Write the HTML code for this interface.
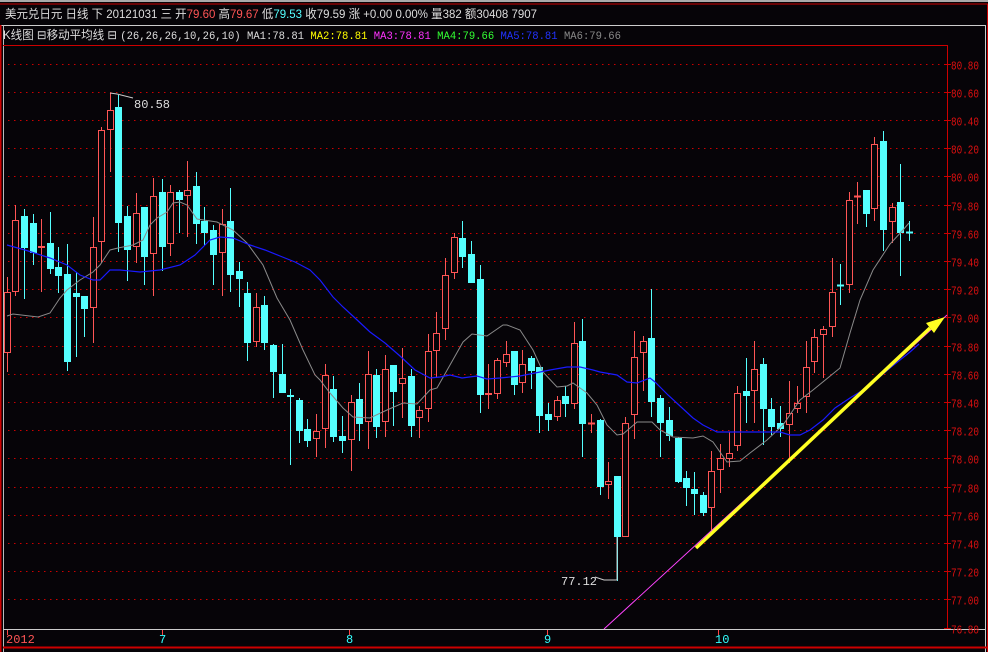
<!DOCTYPE html>
<html><head><meta charset="utf-8"><style>
html,body{margin:0;padding:0;background:#060408;width:988px;height:652px;overflow:hidden}
svg{display:block}
text{font-family:"Liberation Mono","Noto Sans CJK SC",monospace}
.h{font-family:"Liberation Sans","Noto Sans CJK SC",sans-serif;font-size:12px}
</style></head><body>
<svg id="s" width="988" height="652" xmlns="http://www.w3.org/2000/svg">
<rect width="988" height="652" fill="#060408"/>
<line x1="0" y1="1" x2="988" y2="1" stroke="#aaa" stroke-width="2"/>
<line x1="0" y1="4" x2="988" y2="4" stroke="#c00" stroke-width="1"/>
<line x1="0" y1="25.5" x2="985" y2="25.5" stroke="#ccc" stroke-width="1"/>
<line x1="985.5" y1="25" x2="985.5" y2="652" stroke="#ccc"/>
<line x1="987.5" y1="4" x2="987.5" y2="652" stroke="#c00"/>
<line x1="0.5" y1="25" x2="0.5" y2="652" stroke="#c00" stroke-width="2"/>
<line x1="3.5" y1="25" x2="3.5" y2="652" stroke="#bbb"/>
<line x1="3" y1="45.5" x2="947" y2="45.5" stroke="#c00"/>
<line x1="947.5" y1="45" x2="947.5" y2="629" stroke="#c00"/>
<line x1="3" y1="629.5" x2="985" y2="629.5" stroke="#ccc"/>
<line x1="3" y1="647.5" x2="988" y2="647.5" stroke="#c00" stroke-width="2"/>
<text class="h" x="5" y="18" fill="#ddd" textLength="532" lengthAdjust="spacingAndGlyphs">美元兑日元 日线 下 20121031 三 开<tspan fill="#ff5555">79.60</tspan> 高<tspan fill="#ff5555">79.67</tspan> 低<tspan fill="#55ffff">79.53</tspan> 收79.59 涨 +0.00 0.00% 量382 额30408 7907</text>
<text class="h" x="3" y="39" fill="#ddd" textLength="618" lengthAdjust="spacingAndGlyphs">K线图 ⊟移动平均线 ⊟ <tspan font-family="Liberation Mono" font-size="11">(26,26,26,10,26,10) MA1:78.81 <tspan fill="#ffff00">MA2:78.81</tspan> <tspan fill="#ff33ff">MA3:78.81</tspan> <tspan fill="#33ff33">MA4:79.66</tspan> <tspan fill="#2233ff">MA5:78.81</tspan> <tspan fill="#888">MA6:79.66</tspan></tspan></text>
<g id="g"></g>
</svg>
<script>
var g=document.getElementById('g'),h='';
function Y(p){return 543-(p-77.4)*141;}
var labs=['80.80','80.60','80.40','80.20','80.00','79.80','79.60','79.40','79.20','79.00','78.80','78.60','78.40','78.20','78.00','77.80','77.60','77.40','77.20','77.00','76.80'];
for(var i=0;i<labs.length;i++){var y=Math.round(Y(parseFloat(labs[i])))+0.5;
 if(y<628) h+='<line x1="8" y1="'+y+'" x2="947" y2="'+y+'" stroke="#c00" stroke-dasharray="1.5 4.5"/>';
 h+='<line x1="944" y1="'+y+'" x2="951" y2="'+y+'" stroke="#c00"/>';
 h+='<text x="951" y="'+(y+5)+'" fill="#e01010" font-size="11.5" textLength="28" lengthAdjust="spacingAndGlyphs">'+labs[i]+'</text>';}
var c=[[7,277,292,353,372,1],[15,205,220,292,296,1],[24,209,216,248,299,0],[33,214,223,253,265,0],[41,219,246,248,292,1],[50,212,243,269,274,0],[58,247,267,276,293,0],[67,244,274,362,371,0],[76,272,293,297,357,0],[84,296,296,309,337,0],[93,217,247,308,343,1],[101,127,130,242,263,1],[110,93,110,130,172,1],[118,95,107,223,252,0],[127,206,216,250,281,0],[136,193,213,247,263,1],[144,207,207,257,285,0],[153,178,196,254,296,1],[162,179,192,247,271,0],[170,185,192,244,256,1],[179,190,192,200,233,0],[187,161,190,196,237,1],[196,172,186,224,244,0],[204,207,221,233,245,0],[213,225,230,255,285,0],[222,209,224,253,296,1],[230,188,221,275,292,0],[239,262,271,279,307,0],[247,282,293,343,361,0],[256,293,307,342,347,1],[264,296,305,343,350,0],[273,344,345,372,398,0],[282,344,374,393,393,0],[290,389,395,397,465,0],[299,398,400,431,443,0],[307,419,429,441,447,0],[316,414,431,439,457,1],[325,364,375,429,448,1],[333,376,389,437,442,0],[342,416,436,441,453,0],[351,395,402,440,471,1],[359,383,399,424,441,0],[368,351,374,422,449,1],[376,369,375,427,438,0],[385,355,369,422,437,1],[393,365,365,392,426,0],[402,348,378,384,418,1],[411,369,376,426,437,0],[419,406,410,418,438,1],[428,334,351,409,422,1],[436,312,333,351,377,1],[445,258,275,329,340,1],[454,233,237,273,279,1],[462,221,238,257,268,0],[471,241,254,283,283,0],[480,265,279,395,413,0],[488,364,393,395,409,1],[497,358,360,394,399,1],[506,341,354,363,367,1],[514,351,351,385,395,0],[522,350,364,383,393,1],[531,356,358,371,389,0],[539,367,367,416,433,0],[548,403,414,420,431,0],[557,396,400,417,421,1],[565,386,396,404,417,0],[574,322,343,404,409,1],[582,319,341,424,457,0],[591,414,423,423,433,1],[600,419,420,487,495,0],[608,462,481,485,499,1],[617,476,476,537,581,0],[625,417,423,537,537,1],[634,331,357,415,439,1],[643,336,341,353,391,1],[651,289,338,402,417,0],[660,395,398,423,457,0],[669,407,420,436,441,0],[678,437,438,482,483,0],[686,471,478,488,506,0],[694,472,489,494,515,0],[703,492,495,513,516,0],[711,451,471,508,530,1],[720,444,458,470,493,1],[729,432,453,459,467,1],[737,386,393,446,451,1],[746,358,391,396,423,0],[754,341,369,391,423,1],[763,358,364,409,445,0],[771,398,409,427,435,0],[780,406,423,429,437,0],[789,381,413,425,463,1],[797,386,403,409,413,1],[806,341,367,397,413,1],[814,329,337,362,373,1],[823,326,329,335,378,1],[832,258,292,327,337,1],[840,264,285,285,305,0],[849,192,200,285,293,1],[857,182,196,196,224,1],[866,190,190,214,227,0],[874,137,144,209,221,1],[883,131,141,230,251,0],[892,203,207,222,243,1],[900,164,202,233,276,0],[909,221,232,232,241,0]];
function pl(pts,col,w){return '<polyline fill="none" stroke="'+col+'" stroke-width="'+w+'" points="'+pts+'"/>';}
for(var i=0;i<c.length;i++){var d=c[i],x=d[0],col=d[5]?'#ff5555':'#55ffff';
 h+='<line x1="'+(x+0.5)+'" y1="'+d[1]+'" x2="'+(x+0.5)+'" y2="'+d[4]+'" stroke="'+col+'"/>';
 var bh=d[3]-d[2];
 if(bh<2){h+='<line x1="'+(x-3)+'" y1="'+(d[2]+0.5)+'" x2="'+(x+4)+'" y2="'+(d[2]+0.5)+'" stroke="'+col+'" stroke-width="2"/>';}
 else if(d[5]){h+='<rect x="'+(x-2.5)+'" y="'+(d[2]+0.5)+'" width="6" height="'+(bh-1)+'" fill="#060408" stroke="'+col+'"/>';}
 else{h+='<rect x="'+(x-3)+'" y="'+d[2]+'" width="7" height="'+bh+'" fill="'+col+'"/>';}}
h+=pl('7,316 13,314 38,317 50,313 60,298 67,290 80,280 93,272 100,265 110,250 118,248 133,245 143,240 150,225 157,218 167,212 173,203 180,202 187,205 197,219 217,222 233,230 247,243 263,265 277,298 290,320 303,350 315,375 320,380 330,393 343,408 353,417 370,418 387,410 403,403 417,404 430,390 437,388 450,365 463,342 472,334 487,336 503,325 507,325 520,330 533,350 543,372 557,387 567,386 573,383 587,393 597,405 607,425 617,435 623,434 637,422 652,422 660,430 673,437 693,438 703,436 713,442 727,462 740,461 750,453 767,440 783,425 800,400 813,390 840,368 850,333 860,300 873,270 890,244 903,230 909,223','#8a8a8a',1);
h+=pl('7,245 25,250 50,258 67,265 80,275 93,280 100,280 110,270 120,270 140,272 160,270 180,265 195,255 210,240 220,237 233,238 250,245 265,250 280,256 295,262 310,270 320,280 333,297 343,307 355,318 370,332 385,343 400,356 415,370 430,378 440,377 450,375 462,378 477,376 487,379 500,378 520,376 535,373 550,370 567,367 580,367 593,370 600,372 617,375 627,382 637,383 650,378 655,382 668,395 680,406 693,418 703,425 717,432 730,432 760,432 780,432 790,435 800,435 810,430 823,420 835,408 850,398 863,390 876,380 890,368 900,360 910,352 919,344','#1a1aff',1.2);
h+='<line x1="604" y1="629" x2="947" y2="315" stroke="#ff44ff" stroke-width="1"/>';
h+='<line x1="696" y1="548" x2="930" y2="328" stroke="#ffff22" stroke-width="3.5"/>';
h+='<polygon points="945,317 926,323 934,333" fill="#ffff22"/>';
h+='<polyline points="110,93 117,94 133,98" fill="none" stroke="#ccc"/><text x="134" y="108" fill="#ddd" font-size="12">80.58</text>';
h+='<polyline points="595,577 604,580 617,580 617,537" fill="none" stroke="#ccc"/><text x="561" y="585" fill="#ddd" font-size="12">77.12</text>';
h+='<line x1="7.5" y1="630" x2="7.5" y2="635" stroke="#f44"/><text x="6" y="643" fill="#ff5555" font-size="12">2012</text>';
var m=[[162,'7'],[349,'8'],[547,'9'],[718,'10']];
for(var i=0;i<m.length;i++){h+='<line x1="'+(m[i][0]+0.5)+'" y1="630" x2="'+(m[i][0]+0.5)+'" y2="635" stroke="#f44"/><text x="'+(m[i][0]-3)+'" y="643" fill="#33ffff" font-size="12">'+m[i][1]+'</text>';}
g.innerHTML=h;
</script>
</body></html>
